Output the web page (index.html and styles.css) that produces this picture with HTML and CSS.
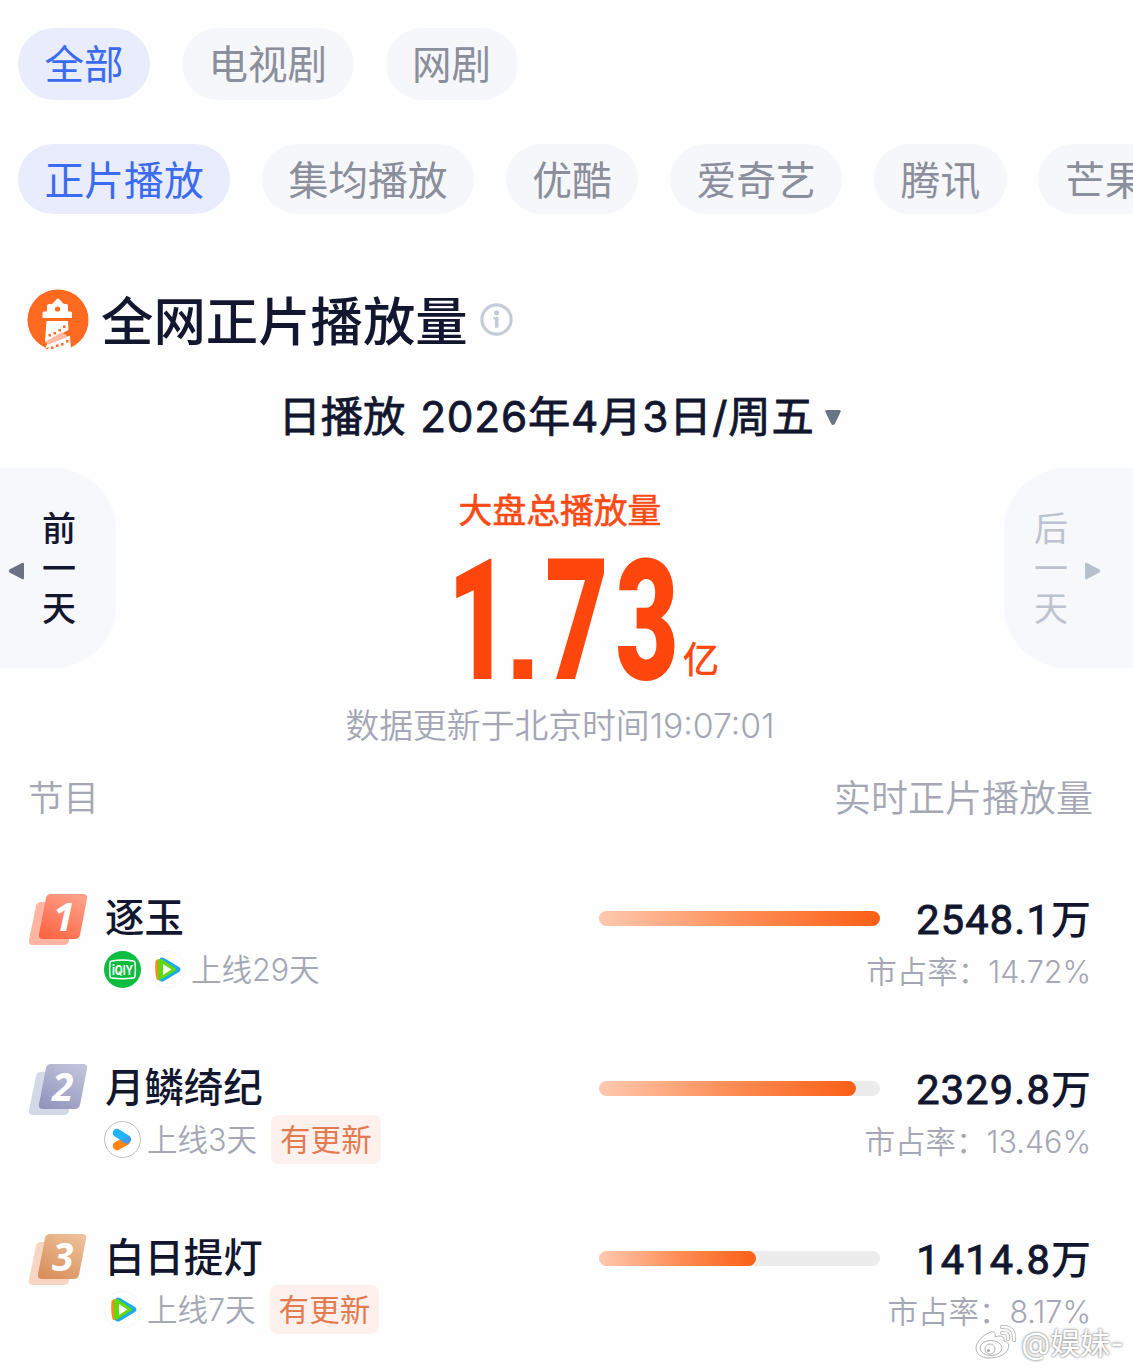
FILE: index.html
```html
<!doctype html>
<html lang="zh-CN">
<head>
    <meta charset="UTF-8">
    <meta name="viewport" content="width=device-width, initial-scale=1.0">
    <link rel="stylesheet" href="styles.css">
    <title>全网正片播放量</title>
</head>
<body>
<nav class="tabs tabs-type">
    <a class="tab active">全部</a>
    <a class="tab">电视剧</a>
    <a class="tab">网剧</a>
</nav>
<nav class="tabs tabs-platform">
    <a class="tab active">正片播放</a>
    <a class="tab">集均播放</a>
    <a class="tab">优酷</a>
    <a class="tab">爱奇艺</a>
    <a class="tab">腾讯</a>
    <a class="tab">芒果</a>
</nav>

<header class="title">
    <svg class="logo" viewBox="0 0 62 62">
        <defs><clipPath id="disc"><circle cx="31" cy="31" r="31"/></clipPath></defs>
        <circle cx="31" cy="31" r="30.5" fill="#ff6a21"/>
        <g clip-path="url(#disc)">
            <path fill="#fff" d="M15.500 24q0-1.500 1.500-1.500h3V17q0-2 2-2h3l5-5q1-1 2 0l5 5h2q2 0 2 2v5.500h2.500q1.500 0 1.500 1.500v5H15.500z"/>
            <circle cx="30.500" cy="20" r="2.600" fill="#ff6a21"/>
            <path fill="#fff" d="M19.500 32H41l.5 9L18 53zM42 47l1.500 15H18l2-7z"/>
            <path fill="#ffb9a3" d="M18 53l17-10 6.500 5-20 8z"/>
            <path fill="#fff" d="M20.500 56L43 47l1 15H16z"/>
            <path fill="#ff6a21" d="M14 61l8-3-2 4z"/>
            <g fill="#ff6a21">
                <rect x="21.500" y="45" width="2.500" height="2.500"/>
                <rect x="26.500" y="43" width="2.500" height="2.500"/>
                <rect x="31.500" y="40" width="2.500" height="2.500"/>
                <rect x="36" y="36.500" width="2.500" height="2.500"/>
                <rect x="24" y="57.500" width="2.500" height="2.500"/>
                <rect x="29" y="55.500" width="2.500" height="2.500"/>
                <rect x="34" y="54" width="2.500" height="2.500"/>
                <rect x="39" y="51" width="2.500" height="2.500"/>
            </g>
        </g>
    </svg>
    <h1>全网正片播放量</h1>
    <svg class="info" viewBox="0 0 32 32">
        <circle cx="16" cy="16" r="14.200" fill="none" stroke="#c5cbd9" stroke-width="3"/>
        <circle cx="16" cy="9.500" r="2.500" fill="#c5cbd9"/>
        <path d="M13 13.500h5V24h-3.500v-8H13z" fill="#c5cbd9"/>
    </svg>
</header>

<div class="date">
    <span>日播放 <span class="day">2026年4月3日/周五</span></span>
    <svg viewBox="0 0 16 17"><path d="M2 1h12q2.500 0 1.500 2L10 14.500q-2 3-4 0L.5 3Q-.5 1 2 1z" fill="#687585"/></svg>
</div>

<section class="summary">
    <a class="step prev">
        <svg viewBox="0 0 16 18"><path d="M15.500 2v14q0 2-2 1L1 10.500Q-.5 9 1 7.500L13.500 1q2-1 2 1z" fill="#6b7083"/></svg>
        <span>前一天</span>
    </a>
    <div class="total">
        <h2>大盘总播放量</h2>
        <svg class="number" viewBox="0 0 270 130">
            <text class="digits" transform="scale(.64 1)" x="-7" y="123.500">1</text>
            <text class="point" x="52.500" y="123.500">.</text>
            <text class="digits" transform="scale(.65 1)" x="143.500 251.500" y="123.500">73</text>
            <text class="unit" x="231" y="118">亿</text>
        </svg>
        <p>数据更新于北京时间19:07:01</p>
    </div>
    <a class="step next">
        <span>后一天</span>
        <svg viewBox="0 0 16 18"><path d="M.5 2v14q0 2 2 1L15 10.500q1.500-1.500 0-3L2.500 1q-2-1-2 1z" fill="#b7c1cd"/></svg>
    </a>
</section>

<div class="list-head">
    <span>节目</span>
    <span class="metric">实时正片播放量</span>
</div>

<ol class="list">
    <li class="row">
        <svg class="rank" viewBox="0 0 60 54">
            <defs><linearGradient id="r1" x1=".8" y1="0" x2=".2" y2="1"><stop offset="0" stop-color="#ffa18a"/><stop offset="1" stop-color="#fb6543"/></linearGradient></defs>
            <path d="M13 9h28q5 0 4 5l-4 34q-1 4-5 4H5q-5 0-4-5L8 13q1-4 5-4z" fill="#ffb5a2"/>
            <path d="M23 1h32q5 0 4 5l-7 36q-1 4-5 4H15q-5 0-4-5l7-36q1-4 5-4z" fill="url(#r1)"/>
            <text x="25" y="38">1</text>
        </svg>
        <div class="show">
            <h3>逐玉</h3>
            <div class="meta">
                <svg class="source" viewBox="0 0 37 37">
                    <circle cx="18.500" cy="18.500" r="18.500" fill="#0bbe3f"/>
                    <path d="M8 10q10.500-2 21 0 2 0 2 2 .8 7 0 13 0 2-2 2-10.500 1.500-21 0-2 0-2-2-.8-7 0-13 0-2 2-2z" fill="none" stroke="#fff" stroke-width="1.500"/>
                    <text class="qiy" x="18.500" y="23.500" text-anchor="middle" textLength="21" lengthAdjust="spacingAndGlyphs">iQIY</text>
                </svg>
                <svg class="source" viewBox="0 0 37 37">
                    <circle cx="18.500" cy="18.500" r="18" fill="#fff" stroke="#f3f6f8"/>
                    <path d="M7.500 10q1-2 4-2v21q-2 1-3-1-2-8-1-18z" fill="#ff8a1c"/>
                    <path d="M12 7q2-1 4 0l15 9q3 2.500 0 5L16 30q-3 1.500-5-1z" fill="#1aaaf0"/>
                    <path d="M10 9q2-2 5 0l12 8q2 1.500 0 3L14 28q-3 2-4-1z" fill="#62d80f"/>
                    <path d="M15 13l8.500 5.500L15 24z" fill="#fff"/>
                </svg>
                <span>上线29天</span>
            </div>
        </div>
        <div class="bar"><div class="fill" style="width: 100%"></div></div>
        <div class="stat">
            <div class="value"><b>2548.1</b>万</div>
            <div class="share">市占率：<i>14.72%</i></div>
        </div>
    </li>
    <li class="row">
        <svg class="rank" viewBox="0 0 60 54">
            <defs><linearGradient id="r2" x1=".8" y1="0" x2=".2" y2="1"><stop offset="0" stop-color="#c2c3db"/><stop offset="1" stop-color="#9395bd"/></linearGradient></defs>
            <path d="M13 9h28q5 0 4 5l-4 34q-1 4-5 4H5q-5 0-4-5L8 13q1-4 5-4z" fill="#d3d9e6"/>
            <path d="M23 1h32q5 0 4 5l-7 36q-1 4-5 4H15q-5 0-4-5l7-36q1-4 5-4z" fill="url(#r2)"/>
            <text x="24" y="38">2</text>
        </svg>
        <div class="show">
            <h3>月鳞绮纪</h3>
            <div class="meta">
                <svg class="source" viewBox="0 0 37 37">
                    <circle cx="18.500" cy="18.500" r="18" fill="#fff" stroke="#bdbfc6"/>
                    <path d="M13 25l9-5" stroke="#ff8412" stroke-width="8.500" stroke-linecap="round"/>
                    <path d="M13 12l9.500 6" stroke="#22b4fb" stroke-width="8.500" stroke-linecap="round"/>
                    <path d="M17 20l8-5q4 3 1 6l-3 2z" fill="#3d9af5"/>
                </svg>
                <span>上线3天</span>
                <em class="tag">有更新</em>
            </div>
        </div>
        <div class="bar"><div class="fill" style="width: 91.600%"></div></div>
        <div class="stat">
            <div class="value"><b>2329.8</b>万</div>
            <div class="share">市占率：<i>13.46%</i></div>
        </div>
    </li>
    <li class="row">
        <svg class="rank" viewBox="0 0 60 54">
            <defs><linearGradient id="r3" x1=".8" y1="0" x2=".2" y2="1"><stop offset="0" stop-color="#edc09a"/><stop offset="1" stop-color="#d98f5b"/></linearGradient></defs>
            <path d="M13 9h28q5 0 4 5l-4 34q-1 4-5 4H5q-5 0-4-5L8 13q1-4 5-4z" fill="#f6d6c2"/>
            <path d="M22 1h32q5 0 4 5l-7 36q-1 4-5 4H14q-5 0-4-5l7-36q1-4 5-4z" fill="url(#r3)"/>
            <text x="24" y="38">3</text>
        </svg>
        <div class="show">
            <h3>白日提灯</h3>
            <div class="meta">
                <svg class="source" viewBox="0 0 37 37">
                    <circle cx="18.500" cy="18.500" r="18" fill="#fff" stroke="#f3f6f8"/>
                    <path d="M7.500 10q1-2 4-2v21q-2 1-3-1-2-8-1-18z" fill="#ff8a1c"/>
                    <path d="M12 7q2-1 4 0l15 9q3 2.500 0 5L16 30q-3 1.500-5-1z" fill="#1aaaf0"/>
                    <path d="M10 9q2-2 5 0l12 8q2 1.500 0 3L14 28q-3 2-4-1z" fill="#62d80f"/>
                    <path d="M15 13l8.500 5.500L15 24z" fill="#fff"/>
                </svg>
                <span>上线7天</span>
                <em class="tag">有更新</em>
            </div>
        </div>
        <div class="bar"><div class="fill" style="width: 55.700%"></div></div>
        <div class="stat">
            <div class="value"><b>1414.8</b>万</div>
            <div class="share">市占率：<i>8.17%</i></div>
        </div>
    </li>
</ol>

<div class="watermark">
    <svg viewBox="0 0 42 36">
        <g fill="#fff" stroke="#b4b4b4" stroke-width="1">
            <path d="M16 7c3-1 5 1 4 5 5-2 10-1 9 4 4 1 6 4 4 8-3 7-12 9-19 9C6 33 1 29 1 23 1 17 9 9 16 7z"/>
            <ellipse cx="16" cy="23" rx="11" ry="7.500"/>
            <circle cx="15" cy="24" r="5"/>
        </g>
        <circle cx="13.500" cy="25.500" r="1.500" fill="#aaa"/>
        <g fill="none" stroke-linecap="round">
            <path d="M27 2q13-1 12 13M27 8q7-1 6 6" stroke="#b4b4b4" stroke-width="4"/>
            <path d="M27 2q13-1 12 13M27 8q7-1 6 6" stroke="#fff" stroke-width="2.500"/>
        </g>
    </svg>
    <span>@娱妹-</span>
</div>
</body>
</html>
```
FILE: styles.css
```css
* {
    box-sizing: border-box;
}

body {
    position: relative;
    width: 1133px;
    height: 1370px;
    margin: 0;
    padding-top: 28px;
    overflow: hidden;
    background-color: #fefefe;
    color: #12172f;
    font-family: Inter, "Noto Sans CJK SC", sans-serif;
}

h1, h2, h3, p, ol {
    margin: 0;
    padding: 0;
    font-weight: 500;
}

svg {
    display: block;
    flex: none;
}

b, i, em {
    font-style: normal;
    font-weight: inherit;
}

.tabs {
    display: flex;
    padding-left: 18px;
    overflow: hidden;
}

.tabs-type {
    gap: 32px;
    height: 72px;
}

.tabs-platform {
    gap: 31.7px;
    height: 70px;
    margin-top: 44px;
}

.tab {
    flex: none;
    padding: 0 26.5px;
    border-radius: 36px;
    background-color: #f6f7fa;
    color: #8b8e9b;
    font-size: 39.8px;
    line-height: 74px;
    white-space: nowrap;
}

.tabs-type .tab {
    font-size: 39.500px;
}

.tab.active {
    background-color: #e8ecfc;
    color: #3a6bf0;
}

.title {
    display: flex;
    align-items: center;
    height: 80px;
    margin-top: 66px;
    padding-left: 27px;
}

.logo {
    width: 62px;
    height: 62px;
}

.title h1 {
    margin-left: 12px;
    padding-top: 5px;
    font-size: 52.4px;
    line-height: 75px;
}

.info {
    width: 33px;
    height: 33px;
    margin: 0 0 1px 12px;
}

.date {
    display: flex;
    align-items: center;
    justify-content: center;
    height: 60px;
    margin-top: 27px;
    padding-right: 14px;
    font-size: 42.3px;
    line-height: 60px;
    white-space: nowrap;
    -webkit-text-stroke: .8px #12172f;
}

.day {
    margin-left: 3px;
    letter-spacing: .8px;
}

.date svg {
    width: 16px;
    height: 17px;
    margin-left: 10px;
}

.summary {
    display: grid;
    grid-template-columns: 116px 1fr 129px;
    height: 290px;
    margin-top: 21px;
}

.step {
    display: flex;
    align-items: center;
    height: 200px;
    background-color: #f7f8fb;
    font-size: 34px;
    line-height: 40px;
}

.step span {
    width: 34px;
    padding-top: 2px;
}

.step svg {
    width: 17px;
    height: 18px;
    margin-top: 5px;
}

.prev {
    gap: 17px;
    padding-left: 8px;
    border-radius: 0 62px 62px 0;
    font-weight: 500;
}

.next {
    gap: 16px;
    padding-left: 30px;
    border-radius: 62px 0 0 62px;
    color: #bdc3ce;
}

.total {
    display: flex;
    flex-direction: column;
    align-items: center;
}

.total h2 {
    height: 42px;
    margin: 22px 0 23px;
    color: #fc4a14;
    font-size: 33.8px;
    font-weight: 400;
    line-height: 42px;
    -webkit-text-stroke: .6px #fc4a14;
}

.number {
    width: 270px;
    height: 130px;
    margin-left: 54px;
    overflow: visible;
    fill: #ff470d;
}

.digits {
    font-family: Roboto, sans-serif;
    font-size: 168px;
    font-weight: 900;
}

.point {
    font-family: "Liberation Sans", sans-serif;
    font-size: 132px;
    font-weight: 700;
}

.unit {
    font-size: 36px;
    stroke: #ff470d;
    stroke-width: .7px;
}

.total p {
    margin-top: 16px;
    color: #a5a7b5;
    font-size: 33.8px;
    font-weight: 350;
    line-height: 50px;
    white-space: nowrap;
}

.list-head {
    display: flex;
    justify-content: space-between;
    height: 60px;
    margin-top: 11px;
    padding: 0 40px 0 28px;
    color: #a5a7b4;
    font-size: 35.500px;
    font-weight: 350;
    line-height: 60px;
}

.metric {
    font-size: 37px;
}

.list {
    margin-top: -1px;
    list-style: none;
}

.row {
    display: grid;
    grid-template-columns: 60px 511px 281px 1fr;
    height: 170px;
    padding: 65px 42px 0 28px;
}

.rank {
    width: 60px;
    height: 54px;
}

.rank text {
    fill: #fff;
    font-family: "Noto Sans", sans-serif;
    font-size: 39px;
    font-style: italic;
    font-weight: 700;
}

.show {
    padding-left: 16px;
}

.show h3 {
    height: 50px;
    padding-left: 1px;
    font-size: 39.4px;
    line-height: 50px;
}

.meta {
    display: flex;
    align-items: center;
    gap: 7px;
    height: 53px;
    color: #a5a7b4;
    font-size: 30.5px;
    font-weight: 350;
    line-height: 40px;
}

.meta span {
    margin-left: -1px;
}

.source {
    width: 37px;
    height: 37px;
}

.qiy {
    fill: #fff;
    font-size: 13px;
    font-weight: 700;
}

.tag {
    margin-left: 7px;
    padding: 1px 9px 0;
    border-radius: 7px;
    background-color: #fef1ed;
    color: #e37b51;
    font-size: 30.6px;
    font-weight: 400;
    line-height: 48px;
}

.bar {
    height: 15px;
    margin-top: 18px;
    border-radius: 8px;
    background-color: #ececec;
}

.fill {
    height: 15px;
    border-radius: 8px;
    background: linear-gradient(90deg, #fec9b0, #fd8e57 50%, #fb5f16);
}

/* the share line is wider than the column and runs under the bar */
.stat {
    margin-left: -20px;
    text-align: right;
    white-space: nowrap;
}

.value {
    height: 52px;
    font-size: 40px;
    line-height: 53px;
}

.value b {
    font-family: Roboto, sans-serif;
    font-size: 41.500px;
    font-weight: 400;
    letter-spacing: 1.2px;
    -webkit-text-stroke: .9px #12172f;
}

.share {
    height: 52px;
    color: #a5a7b4;
    font-size: 30.500px;
    font-weight: 350;
    line-height: 54px;
}

.watermark {
    position: absolute;
    right: 9px;
    bottom: 6px;
    display: flex;
    align-items: center;
    gap: 4px;
    color: #fff;
    font-size: 30px;
    line-height: 42px;
    text-shadow: 0 0 2px #888, 0 0 3px #999;
}

.watermark svg {
    width: 42px;
    height: 36px;
}
```
